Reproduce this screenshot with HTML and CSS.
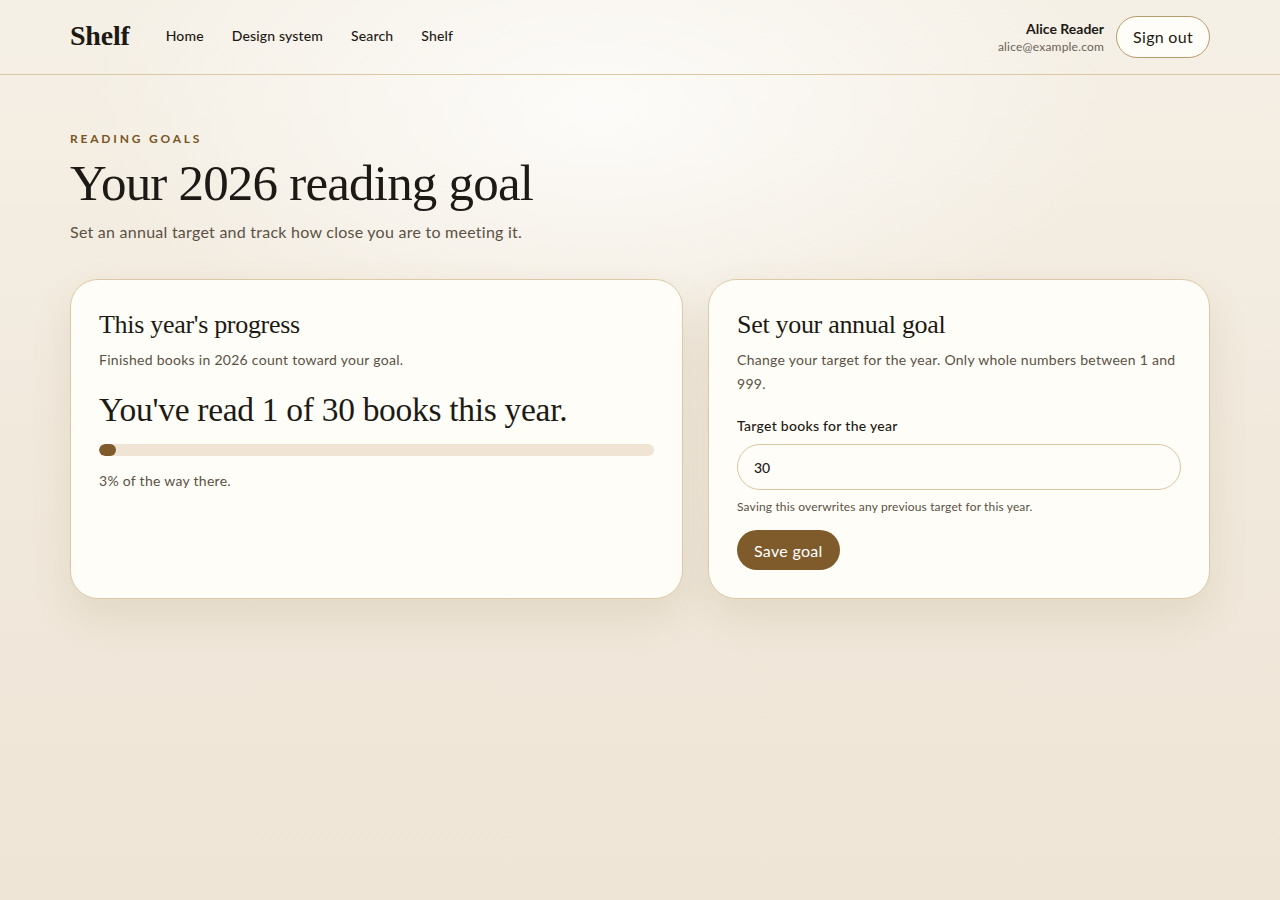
FILE: index.html
```html
<!DOCTYPE html>
<html lang="en">
<head>
    <meta charset="UTF-8">
    <meta name="viewport" content="width=device-width, initial-scale=1.0">
    <title>Reading goals · Shelf</title>

    <link rel="stylesheet" href="styles.css">

</head>
<body>

<!-- Top bar -->
<header class="topbar">
    <div class="topbar-inner">
        <div class="topbar-left">
            <a class="logo" href="#">Shelf</a>
            <nav class="nav">
                <a href="#">Home</a>
                <a href="#">Design system</a>
                <a href="#">Search</a>
                <a href="#">Shelf</a>
            </nav>
        </div>
        <div class="topbar-right">
            <div class="user">
                <span class="user-name">Alice Reader</span>
                <span class="user-email">alice@example.com</span>
            </div>
            <button class="btn-outline">Sign out</button>
        </div>
    </div>
</header>

<main class="page">
    <!-- Page heading -->
    <section class="intro">
        <p class="eyebrow">Reading goals</p>
        <h1>Your 2026 reading goal</h1>
        <p class="lead">Set an annual target and track how close you are to meeting it.</p>
    </section>

    <div class="cards">
        <!-- Progress card -->
        <section class="card">
            <h2>This year's progress</h2>
            <p class="muted">Finished books in 2026 count toward your goal.</p>
            <p class="big-stat">You've read 1 of 30 books this year.</p>
            <div class="progress">
                <div class="progress-fill" style="width: 3%"></div>
            </div>
            <p class="muted">3% of the way there.</p>
        </section>

        <!-- Goal form card -->
        <section class="card">
            <h2>Set your annual goal</h2>
            <p class="muted tall">Change your target for the year. Only whole numbers between 1 and 999.</p>
            <form class="goal-form" onsubmit="return false">
                <label for="target">Target books for the year</label>
                <input id="target" type="text" value="30">
                <p class="hint">Saving this overwrites any previous target for this year.</p>
                <button class="btn-primary" type="submit">Save goal</button>
            </form>
        </section>
    </div>
</main>

</body>
</html>
```

FILE: styles.css
```css
/* Base page */
body {
    margin: 0;
    min-height: 100vh;
    font-family: 'Lato', 'Open Sans', sans-serif;
    color: #1d1a15;
    background-color: #efe6d7;
    background-image:
        radial-gradient(ellipse 520px 260px at 600px 110px, rgba(255, 255, 255, 0.8), rgba(255, 255, 255, 0) 100%),
        linear-gradient(180deg, #f5f0e6 0%, #f1e9dc 50%, #eee5d6 100%);
}

a {
    color: inherit;
    text-decoration: none;
}

/* Top bar */
.topbar {
    border-bottom: 1px solid #dcc9a2;
}

.topbar-inner {
    max-width: 1140px;
    margin: 0 auto;
    height: 74px;
    display: flex;
    align-items: center;
    justify-content: space-between;
}

.topbar-left {
    display: flex;
    align-items: center;
    gap: 36px;
}

.logo {
    font-family: 'Liberation Serif', serif;
    font-weight: bold;
    font-size: 28px;
    letter-spacing: -0.2px;
    margin-top: -2px;
}

.nav {
    display: flex;
    gap: 28px;
    font-size: 14px;
    font-weight: 500;
    letter-spacing: 0.15px;
    margin-top: -3px;
}

.topbar-right {
    display: flex;
    align-items: center;
    gap: 12px;
}

.user {
    display: flex;
    flex-direction: column;
    align-items: flex-end;
    gap: 2px;
    margin-top: -1px;
}

.user-name {
    font-size: 14px;
    font-weight: bold;
}

.user-email {
    font-size: 12px;
    color: #6b6256;
    letter-spacing: 0.2px;
}

.btn-outline {
    font-family: inherit;
    font-size: 16px;
    letter-spacing: 0.3px;
    color: #1d1a15;
    background: #fffdf7;
    border: 1px solid #b99c6c;
    border-radius: 999px;
    height: 42px;
    padding: 0 16px;
    margin-top: -1px;
    cursor: pointer;
}

/* Main content */
.page {
    max-width: 1140px;
    margin: 0 auto;
    padding-top: 56px;
}

.eyebrow {
    margin: 0;
    font-size: 12px;
    font-weight: bold;
    letter-spacing: 2.8px;
    text-transform: uppercase;
    color: #7a5524;
}

.intro h1 {
    margin: 7px 0 0;
    font-family: 'Liberation Serif', serif;
    font-weight: normal;
    font-size: 51px;
    line-height: 60px;
    letter-spacing: -0.8px;
}

.lead {
    margin: 9px 0 0;
    font-size: 16px;
    letter-spacing: 0.25px;
    color: #5b5145;
}

/* Cards */
.cards {
    display: grid;
    grid-template-columns: 613fr 502fr;
    gap: 25px;
    margin-top: 38px;
    align-items: stretch;
}

.card {
    background: #fffdf7;
    border: 1px solid #dccaa6;
    border-radius: 28px;
    padding: 28px 28px 28px;
    box-shadow: 0 18px 40px rgba(120, 95, 50, 0.12);
}

.card h2 {
    margin: 0;
    font-family: 'Liberation Serif', serif;
    font-weight: normal;
    font-size: 26px;
    line-height: 34px;
    letter-spacing: -0.3px;
}

.muted {
    margin: 8px 0 0;
    font-size: 14px;
    line-height: 20px;
    letter-spacing: 0.28px;
    color: #5b5145;
}

.muted.tall {
    line-height: 24px;
    margin-top: 6px;
}

.big-stat {
    margin: 20px 0 0;
    font-family: 'Liberation Serif', serif;
    font-size: 33.5px;
    line-height: 40px;
    letter-spacing: -0.3px;
}

/* Progress bar */
.progress {
    margin-top: 14px;
    height: 12px;
    border-radius: 6px;
    background: #f0e4d4;
    overflow: hidden;
}

.progress-fill {
    height: 100%;
    background: #7f5b2b;
    border-radius: 6px;
}

.progress + .muted {
    margin-top: 15px;
}

/* Goal form */
.goal-form {
    display: flex;
    flex-direction: column;
    align-items: flex-start;
    margin-top: 21px;
}

.goal-form label {
    font-size: 14px;
    font-weight: 500;
    letter-spacing: 0.28px;
}

.goal-form input {
    box-sizing: border-box;
    width: 100%;
    height: 46px;
    margin-top: 10px;
    padding: 0 16px;
    font-family: inherit;
    font-size: 14px;
    font-weight: 500;
    color: #1d1a15;
    background: #fffdf7;
    border: 1px solid #d9c6a0;
    border-radius: 23px;
    outline: none;
}

.hint {
    margin: 9px 0 0;
    font-size: 12px;
    letter-spacing: 0.15px;
    color: #5b5145;
}

.btn-primary {
    margin-top: 16px;
    height: 40px;
    padding: 0 17px;
    font-family: inherit;
    font-size: 16px;
    letter-spacing: 0.3px;
    color: #fff;
    background: #7f5b2b;
    border: none;
    border-radius: 20px;
    cursor: pointer;
}
```
